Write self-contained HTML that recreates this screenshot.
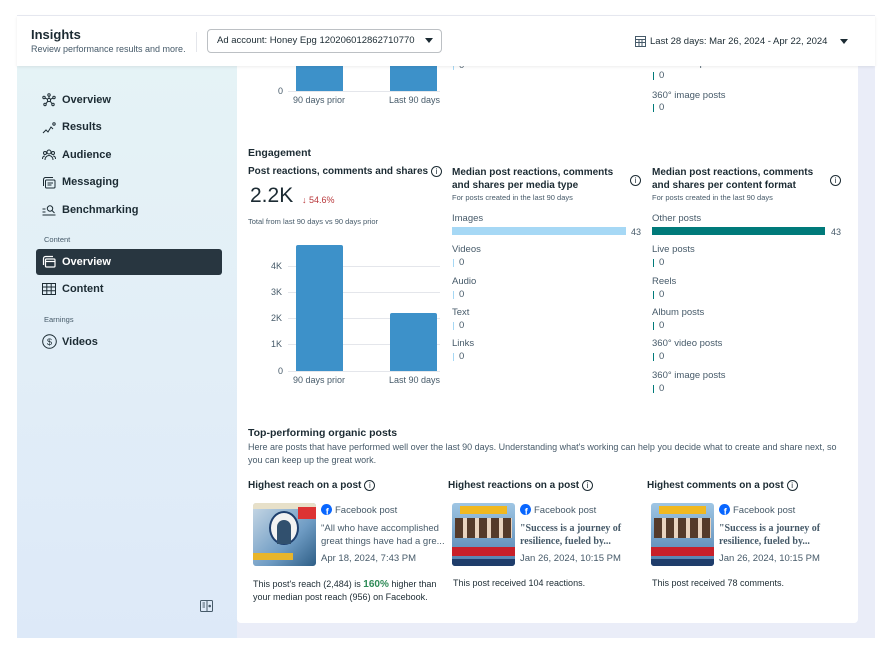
<!DOCTYPE html>
<html><head><meta charset="utf-8"><style>
*{margin:0;padding:0;box-sizing:border-box}
body{width:891px;height:654px;background:#fff;font-family:"Liberation Sans",Arial,sans-serif;color:#1c2b33;position:relative;overflow:hidden}
.a{position:absolute;white-space:nowrap}
.s{font-size:9px;color:#465a69}
.b{font-weight:bold}
.n{font-size:11px;font-weight:bold;color:#1c2b33}
.lbl{font-size:9.5px;color:#465a69}
.z{font-size:9.5px;color:#465a69}
.tick{position:absolute;width:1px;height:8px}
.info{display:inline-block;width:11px;height:11px;border:1px solid #1c2b33;border-radius:50%;font-size:8px;text-align:center;line-height:9px;vertical-align:middle;margin-left:3px;font-weight:normal}
.grid{position:absolute;left:288px;width:152px;height:1px;background:#e4e6eb}
.hdr{z-index:5}
</style></head><body>
<div class="a" style="left:17px;top:15px;width:858px;height:1px;background:#e8eaf2"></div>
<div class="a" style="left:17px;top:66px;width:858px;height:572px;background:#eaedf8"></div>
<div class="a" style="left:17px;top:66px;width:220px;height:572px;background:linear-gradient(180deg,#e5f3f6 0%,#e2eef7 50%,#dde9f8 100%)"></div>
<!-- header -->
<div class="a hdr" style="left:17px;top:16px;width:858px;height:50px;background:#fff;box-shadow:0 1px 3px rgba(0,0,0,.08)"></div>
<div class="a hdr" style="left:31px;top:27px;font-size:13px;font-weight:bold;color:#1c2b33">Insights</div>
<div class="a hdr" style="left:31px;top:44px;font-size:9px;color:#465a69">Review performance results and more.</div>
<div class="a hdr" style="left:196px;top:32px;width:1px;height:20px;background:#e4e6eb"></div>
<div class="a hdr" style="left:207px;top:29px;width:235px;height:24px;border:1px solid #bcc0c4;border-radius:4px;background:#fff"></div>
<div class="a hdr" style="left:217px;top:35px;font-size:9.5px;color:#1c2b33">Ad account: Honey Epg 120206012862710770</div>
<div class="a hdr" style="left:425px;top:38px;width:0;height:0;border-left:4px solid transparent;border-right:4px solid transparent;border-top:5px solid #1c2b33"></div>
<svg class="a hdr" style="left:635px;top:36px" width="11" height="11" viewBox="0 0 11 11" fill="none" stroke="#465a69" stroke-width="1"><rect x=".5" y=".5" width="10" height="10"/><path d="M.5 3.5h10M.5 6.5h10M4 3.5v7M7 3.5v7"/></svg>
<div class="a hdr" style="left:650px;top:36px;font-size:9.5px;color:#1c2b33">Last 28 days: Mar 26, 2024 - Apr 22, 2024</div>
<div class="a hdr" style="left:840px;top:39px;width:0;height:0;border-left:4px solid transparent;border-right:4px solid transparent;border-top:5px solid #1c2b33"></div>
<!-- sidebar -->
<svg class="a" style="left:42px;top:93px" width="14" height="14" viewBox="0 0 14 14" fill="none" stroke="#1c2b33" stroke-width="1"><circle cx="7" cy="7" r="1.6"/><circle cx="7" cy="2" r="1.2"/><circle cx="2" cy="4.5" r="1.2"/><circle cx="12" cy="4.5" r="1.2"/><circle cx="3" cy="11.5" r="1.2"/><circle cx="11" cy="11.5" r="1.2"/><path d="M7 3.2v2.2M3 5l2.5 1.3M11 5l-2.5 1.3M4 10.7l1.8-2.5M10 10.7l-1.8-2.5"/></svg>
<div class="a n" style="left:62px;top:94px">Overview</div>
<svg class="a" style="left:42px;top:121px" width="14" height="14" viewBox="0 0 14 14" fill="none" stroke="#1c2b33" stroke-width="1"><path d="M1 12l3-3 2 2 3-5 2 2"/><circle cx="12" cy="3" r="1.2"/></svg>
<div class="a n" style="left:62px;top:121px">Results</div>
<svg class="a" style="left:42px;top:148px" width="14" height="14" viewBox="0 0 14 14" fill="none" stroke="#1c2b33" stroke-width="1"><circle cx="7" cy="4" r="2"/><circle cx="3" cy="5" r="1.5"/><circle cx="11" cy="5" r="1.5"/><path d="M3 12c0-3 2-4.5 4-4.5s4 1.5 4 4.5M0.5 11c0-2 1-3 2.5-3M13.5 11c0-2-1-3-2.5-3"/></svg>
<div class="a n" style="left:62px;top:149px">Audience</div>
<svg class="a" style="left:42px;top:176px" width="14" height="14" viewBox="0 0 14 14" fill="none" stroke="#1c2b33" stroke-width="1"><path d="M1.5 10V3.5a2 2 0 0 1 2-2H11"/><rect x="3.5" y="4" width="9.5" height="8" rx="1"/><path d="M5.5 7h5.5M5.5 9h4"/></svg>
<div class="a n" style="left:62px;top:176px">Messaging</div>
<svg class="a" style="left:42px;top:203px" width="14" height="14" viewBox="0 0 14 14" fill="none" stroke="#1c2b33" stroke-width="1"><path d="M0.5 6h3M0.5 9h3M0.5 12h13"/><circle cx="8" cy="5.5" r="2.7"/><path d="M10 7.5l2.5 2.5"/></svg>
<div class="a n" style="left:62px;top:204px">Benchmarking</div>
<div class="a" style="left:44px;top:235px;font-size:7.5px;color:#465a69">Content</div>
<div class="a" style="left:36px;top:249px;width:186px;height:26px;background:#283640;border-radius:3px"></div>
<svg class="a" style="left:42px;top:255px" width="14" height="14" viewBox="0 0 14 14" fill="none" stroke="#fff" stroke-width="1.2"><path d="M1.5 10V3.5a2 2 0 0 1 2-2H11"/><rect x="3.5" y="4" width="9.5" height="8" rx="1"/><path d="M3.5 6.5h9.5"/></svg>
<div class="a n" style="left:62px;top:256px;color:#fff">Overview</div>
<svg class="a" style="left:42px;top:283px" width="14" height="12" viewBox="0 0 14 12" fill="none" stroke="#1c2b33" stroke-width="1"><rect x=".5" y=".5" width="13" height="11"/><path d="M.5 4h13M.5 7.7h13M4.8 .5v11M9.2 .5v11"/></svg>
<div class="a n" style="left:62px;top:283px">Content</div>
<div class="a" style="left:44px;top:315px;font-size:7.5px;color:#465a69">Earnings</div>
<svg class="a" style="left:42px;top:334px" width="15" height="15" viewBox="0 0 15 15" fill="none" stroke="#1c2b33" stroke-width="1"><circle cx="7.5" cy="7.5" r="6.8"/><text x="7.5" y="11" font-size="9" text-anchor="middle" fill="#1c2b33" stroke="none" font-family="Liberation Sans">$</text></svg>
<div class="a n" style="left:62px;top:336px">Videos</div>
<svg class="a" style="left:200px;top:600px" width="13" height="12" viewBox="0 0 13 12" fill="none" stroke="#465a69" stroke-width="1"><rect x=".5" y=".5" width="12" height="11" rx="1"/><path d="M7 .5v11M2.5 3h2.5M2.5 5h2.5M2.5 7h2.5"/><circle cx="9.7" cy="6" r=".8" fill="#465a69"/></svg>
<!-- card -->
<div class="a" style="left:237px;top:66px;width:621px;height:557px;background:#fff;border-radius:0 0 4px 4px"></div>
<!-- top chart remnant -->
<div class="a" style="left:296px;top:60px;width:47px;height:31px;background:#3d91c9"></div>
<div class="a" style="left:390px;top:60px;width:47px;height:31px;background:#3d91c9"></div>
<div class="grid" style="top:91px"></div>
<div class="a s" style="left:278px;top:86px">0</div>
<div class="a s" style="left:293px;top:95px">90 days prior</div>
<div class="a s" style="left:389px;top:95px">Last 90 days</div>
<div class="tick" style="left:453px;top:62px;background:#a6d8f5"></div><div class="a z" style="left:459px;top:60px">0</div>
<div class="a lbl" style="left:652px;top:58px">360° video posts</div>
<div class="tick" style="left:653px;top:72px;background:#007a7a"></div><div class="a z" style="left:659px;top:70px">0</div>
<div class="a lbl" style="left:652px;top:90px">360° image posts</div>
<div class="tick" style="left:653px;top:104px;background:#007a7a"></div><div class="a z" style="left:659px;top:102px">0</div>
<!-- engagement -->
<div class="a" style="left:248px;top:147px;font-size:10.5px;font-weight:bold">Engagement</div>
<div class="a b" style="left:248px;top:166px;font-size:10px">Post reactions, comments and shares<span class="info">i</span></div>
<div class="a" style="left:250px;top:184px;font-size:21px;color:#1c2b33">2.2K</div>
<div class="a" style="left:302px;top:195px;font-size:9px;color:#b8373a">↓ 54.6%</div>
<div class="a" style="left:248px;top:217px;font-size:7.5px;color:#465a69">Total from last 90 days vs 90 days prior</div>
<div class="grid" style="top:266px"></div><div class="grid" style="top:292px"></div><div class="grid" style="top:318px"></div><div class="grid" style="top:344px"></div><div class="grid" style="top:371px"></div>
<div class="a s" style="left:271px;top:261px">4K</div>
<div class="a s" style="left:271px;top:287px">3K</div>
<div class="a s" style="left:271px;top:313px">2K</div>
<div class="a s" style="left:271px;top:339px">1K</div>
<div class="a s" style="left:278px;top:366px">0</div>
<div class="a" style="left:296px;top:245px;width:47px;height:126px;background:#3d91c9;border-radius:2px 2px 0 0"></div>
<div class="a" style="left:390px;top:313px;width:47px;height:58px;background:#3d91c9;border-radius:2px 2px 0 0"></div>
<div class="a s" style="left:293px;top:375px">90 days prior</div>
<div class="a s" style="left:389px;top:375px">Last 90 days</div>
<!-- mid col -->
<div class="a b" style="left:452px;top:166px;font-size:10px;line-height:13px">Median post reactions, comments<br>and shares per media type</div>
<div class="a" style="left:630px;top:172px"><span class="info" style="margin:0">i</span></div>
<div class="a" style="left:452px;top:193px;font-size:7.5px;color:#465a69">For posts created in the last 90 days</div>
<div class="a lbl" style="left:452px;top:213px">Images</div>
<div class="a" style="left:452px;top:227px;width:174px;height:8px;background:#a6d8f5"></div>
<div class="a s" style="left:631px;top:227px">43</div>
<div class="a lbl" style="left:452px;top:244px">Videos</div><div class="tick" style="left:453px;top:259px;background:#a6d8f5"></div><div class="a z" style="left:459px;top:257px">0</div>
<div class="a lbl" style="left:452px;top:276px">Audio</div><div class="tick" style="left:453px;top:291px;background:#a6d8f5"></div><div class="a z" style="left:459px;top:289px">0</div>
<div class="a lbl" style="left:452px;top:307px">Text</div><div class="tick" style="left:453px;top:322px;background:#a6d8f5"></div><div class="a z" style="left:459px;top:320px">0</div>
<div class="a lbl" style="left:452px;top:338px">Links</div><div class="tick" style="left:453px;top:353px;background:#a6d8f5"></div><div class="a z" style="left:459px;top:351px">0</div>
<!-- right col -->
<div class="a b" style="left:652px;top:166px;font-size:10px;line-height:13px">Median post reactions, comments<br>and shares per content format</div>
<div class="a" style="left:830px;top:172px"><span class="info" style="margin:0">i</span></div>
<div class="a" style="left:652px;top:193px;font-size:7.5px;color:#465a69">For posts created in the last 90 days</div>
<div class="a lbl" style="left:652px;top:213px">Other posts</div>
<div class="a" style="left:652px;top:227px;width:173px;height:8px;background:#007a7a"></div>
<div class="a s" style="left:831px;top:227px">43</div>
<div class="a lbl" style="left:652px;top:244px">Live posts</div><div class="tick" style="left:653px;top:259px;background:#007a7a"></div><div class="a z" style="left:659px;top:257px">0</div>
<div class="a lbl" style="left:652px;top:276px">Reels</div><div class="tick" style="left:653px;top:291px;background:#007a7a"></div><div class="a z" style="left:659px;top:289px">0</div>
<div class="a lbl" style="left:652px;top:307px">Album posts</div><div class="tick" style="left:653px;top:322px;background:#007a7a"></div><div class="a z" style="left:659px;top:320px">0</div>
<div class="a lbl" style="left:652px;top:338px">360° video posts</div><div class="tick" style="left:653px;top:353px;background:#007a7a"></div><div class="a z" style="left:659px;top:351px">0</div>
<div class="a lbl" style="left:652px;top:370px">360° image posts</div><div class="tick" style="left:653px;top:385px;background:#007a7a"></div><div class="a z" style="left:659px;top:383px">0</div>
<!-- top posts -->
<div class="a" style="left:248px;top:427px;font-size:10.5px;font-weight:bold">Top-performing organic posts</div>
<div class="a" style="left:248px;top:441px;font-size:9px;color:#465a69;line-height:13px">Here are posts that have performed well over the last 90 days. Understanding what's working can help you decide what to create and share next, so<br>you can keep up the great work.</div>

<div class="a b" style="left:248px;top:480px;font-size:10px">Highest reach on a post<span class="info">i</span></div>
<div class="a b" style="left:448px;top:480px;font-size:10px">Highest reactions on a post<span class="info">i</span></div>
<div class="a b" style="left:647px;top:480px;font-size:10px">Highest comments on a post<span class="info">i</span></div>

<!-- thumbs -->
<div class="a" style="left:253px;top:503px;width:63px;height:63px;background:linear-gradient(135deg,#c9d9e6,#6f9cc4 60%,#2e5e86);border-radius:3px;overflow:hidden">
 <div style="position:absolute;left:0;top:0;width:63px;height:6px;background:#e7e0c9"></div>
 <div style="position:absolute;left:16px;top:8px;width:30px;height:34px;border-radius:50%;background:#f2f2f2;border:2px solid #1e3f6d"><div style="margin:7px auto 0;width:14px;height:24px;background:#31506e;border-radius:7px 7px 0 0"></div></div>
 <div style="position:absolute;left:0;top:50px;width:40px;height:7px;background:#e8b52b"></div>
 <div style="position:absolute;right:0;top:4px;width:18px;height:12px;background:#d33"></div>
</div>
<div class="a" style="left:452px;top:503px;width:63px;height:63px;background:linear-gradient(180deg,#9fc6e4,#4f7fae);border-radius:3px;overflow:hidden">
 <div style="position:absolute;left:8px;top:3px;width:47px;height:8px;background:#f0b820"></div>
 <div style="position:absolute;left:3px;top:15px;width:57px;height:20px;background:repeating-linear-gradient(90deg,#553a2a 0 8px,#e9d3bf 8px 12px)"></div>
 <div style="position:absolute;left:0;top:44px;width:63px;height:9px;background:#c8202a"></div>
 <div style="position:absolute;left:0;top:56px;width:63px;height:7px;background:#1f3d6b"></div>
</div>
<div class="a" style="left:651px;top:503px;width:63px;height:63px;background:linear-gradient(180deg,#9fc6e4,#4f7fae);border-radius:3px;overflow:hidden">
 <div style="position:absolute;left:8px;top:3px;width:47px;height:8px;background:#f0b820"></div>
 <div style="position:absolute;left:3px;top:15px;width:57px;height:20px;background:repeating-linear-gradient(90deg,#553a2a 0 8px,#e9d3bf 8px 12px)"></div>
 <div style="position:absolute;left:0;top:44px;width:63px;height:9px;background:#c8202a"></div>
 <div style="position:absolute;left:0;top:56px;width:63px;height:7px;background:#1f3d6b"></div>
</div>

<!-- post 1 -->
<svg class="a" style="left:321px;top:504px" width="11" height="11" viewBox="0 0 11 11"><circle cx="5.5" cy="5.5" r="5.5" fill="#0866ff"/><text x="6.3" y="10.5" font-size="9" font-weight="bold" fill="#fff" text-anchor="middle" font-family="Liberation Sans">f</text></svg>
<div class="a" style="left:335px;top:505px;font-size:9.5px;color:#465a69">Facebook post</div>
<div class="a" style="left:321px;top:522px;font-size:9.5px;color:#465a69;line-height:13px">"All who have accomplished<br>great things have had a gre...</div>
<div class="a" style="left:321px;top:553px;font-size:9.5px;color:#465a69">Apr 18, 2024, 7:43 PM</div>
<div class="a" style="left:253px;top:578px;font-size:9px;color:#1c2b33;line-height:13px">This post's reach (2,484) is <b style="color:#2e8b57;font-size:10px">160%</b> higher than<br>your median post reach (956) on Facebook.</div>
<!-- post 2 -->
<svg class="a" style="left:520px;top:504px" width="11" height="11" viewBox="0 0 11 11"><circle cx="5.5" cy="5.5" r="5.5" fill="#0866ff"/><text x="6.3" y="10.5" font-size="9" font-weight="bold" fill="#fff" text-anchor="middle" font-family="Liberation Sans">f</text></svg>
<div class="a" style="left:534px;top:505px;font-size:9.5px;color:#465a69">Facebook post</div>
<div class="a" style="left:520px;top:522px;font-size:10px;color:#465a69;line-height:13px;font-family:'Liberation Serif',serif;font-weight:bold">"Success is a journey of<br>resilience, fueled by...</div>
<div class="a" style="left:520px;top:553px;font-size:9.5px;color:#465a69">Jan 26, 2024, 10:15 PM</div>
<div class="a" style="left:453px;top:578px;font-size:9px;color:#1c2b33">This post received 104 reactions.</div>
<!-- post 3 -->
<svg class="a" style="left:719px;top:504px" width="11" height="11" viewBox="0 0 11 11"><circle cx="5.5" cy="5.5" r="5.5" fill="#0866ff"/><text x="6.3" y="10.5" font-size="9" font-weight="bold" fill="#fff" text-anchor="middle" font-family="Liberation Sans">f</text></svg>
<div class="a" style="left:733px;top:505px;font-size:9.5px;color:#465a69">Facebook post</div>
<div class="a" style="left:719px;top:522px;font-size:10px;color:#465a69;line-height:13px;font-family:'Liberation Serif',serif;font-weight:bold">"Success is a journey of<br>resilience, fueled by...</div>
<div class="a" style="left:719px;top:553px;font-size:9.5px;color:#465a69">Jan 26, 2024, 10:15 PM</div>
<div class="a" style="left:652px;top:578px;font-size:9px;color:#1c2b33">This post received 78 comments.</div>
</body></html>
